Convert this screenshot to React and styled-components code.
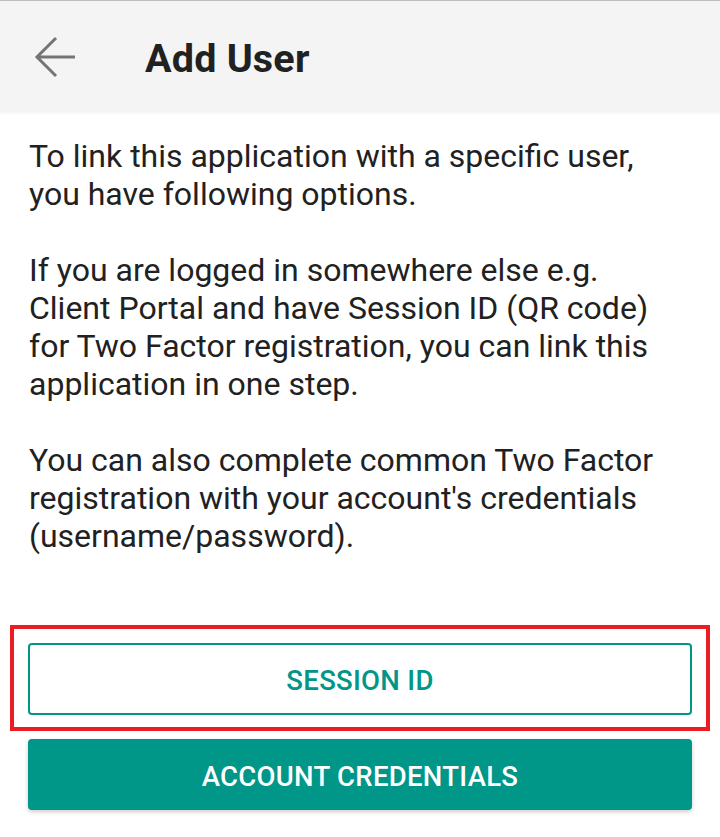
import React from "react";
import styled, { createGlobalStyle } from "styled-components";

const GlobalStyle = createGlobalStyle`
  html, body {
    margin: 0;
    padding: 0;
    background: #ffffff;
    font-family: Roboto, "Noto Sans", "Liberation Sans", sans-serif;
  }
`;

const Screen = styled.div`
  width: 720px;
  min-height: 837px;
  background: #ffffff;
  overflow: hidden;
`;

const Header = styled.div`
  height: 111px;
  border-top: 1px solid #bdbdbd;
  background: #f4f4f4;
  display: flex;
  align-items: center;
  box-shadow: 0 1px 3px rgba(0, 0, 0, 0.06);
`;

const BackButton = styled.button`
  width: 48px;
  height: 48px;
  margin-left: 32px;
  padding: 0;
  border: none;
  background: none;
  display: flex;
  align-items: center;
  justify-content: center;
  color: #757575;
`;

const Title = styled.h1`
  margin: 4px 0 0 65px;
  font-size: 39.5px;
  font-weight: 700;
  color: #212121;
  letter-spacing: 0.2px;
`;

const Body = styled.div`
  padding: 25px 29px 0;
`;

const Paragraph = styled.p`
  margin: 0 0 38px;
  font-size: 32px;
  line-height: 38px;
  color: #212121;
`;

const Actions = styled.div`
  margin-top: 70px;
  display: flex;
  flex-direction: column;
  gap: 8px;
`;

const Highlight = styled.div`
  margin: 0 10px;
  border: 4px solid #ec1c24;
  padding: 14px 14px 12px;
`;

const Button = styled.button`
  width: ${(p) => (p.$inset ? "100%" : "664px")};
  margin: ${(p) => (p.$inset ? "0" : "0 28px")};
  height: ${(p) => (p.$outline ? "72px" : "71px")};
  border-radius: 4px;
  border: 2px solid #009688;
  background: ${(p) => (p.$outline ? "#ffffff" : "#009688")};
  color: ${(p) => (p.$outline ? "#009688" : "#ffffff")};
  box-shadow: ${(p) => (p.$outline ? "none" : "0 2px 4px rgba(0,0,0,0.2)")};
  font-family: Roboto, "Noto Sans", sans-serif;
  font-size: 27.5px;
  font-weight: 500;
  letter-spacing: 0.3px;
  text-transform: uppercase;
  padding: 3px 0 0;
`;

const BackIcon = () => (
  <svg width="44" height="44" viewBox="0 0 44 44" fill="none">
    <path
      d="M41 22H3M22 3L3 22l19 19"
      stroke="currentColor"
      strokeWidth="3"
      strokeLinecap="butt"
      strokeLinejoin="miter"
    />
  </svg>
);

const App = () => {
  return (
    <Screen>
      <GlobalStyle />
      <Header>
        <BackButton aria-label="Back">
          <BackIcon />
        </BackButton>
        <Title>Add User</Title>
      </Header>
      <Body>
        <Paragraph>
          To link this application with a specific user,
          <br />
          you have following options.
        </Paragraph>
        <Paragraph>
          If you are logged in somewhere else e.g.
          <br />
          Client Portal and have Session ID (QR code)
          <br />
          for Two Factor registration, you can link this
          <br />
          application in one step.
        </Paragraph>
        <Paragraph>
          You can also complete common Two Factor
          <br />
          registration with your account's credentials
          <br />
          (username/password).
        </Paragraph>
      </Body>
      <Actions>
        <Highlight>
          <Button $outline $inset>Session ID</Button>
        </Highlight>
        <Button>Account Credentials</Button>
      </Actions>
    </Screen>
  );
};

export default App;
